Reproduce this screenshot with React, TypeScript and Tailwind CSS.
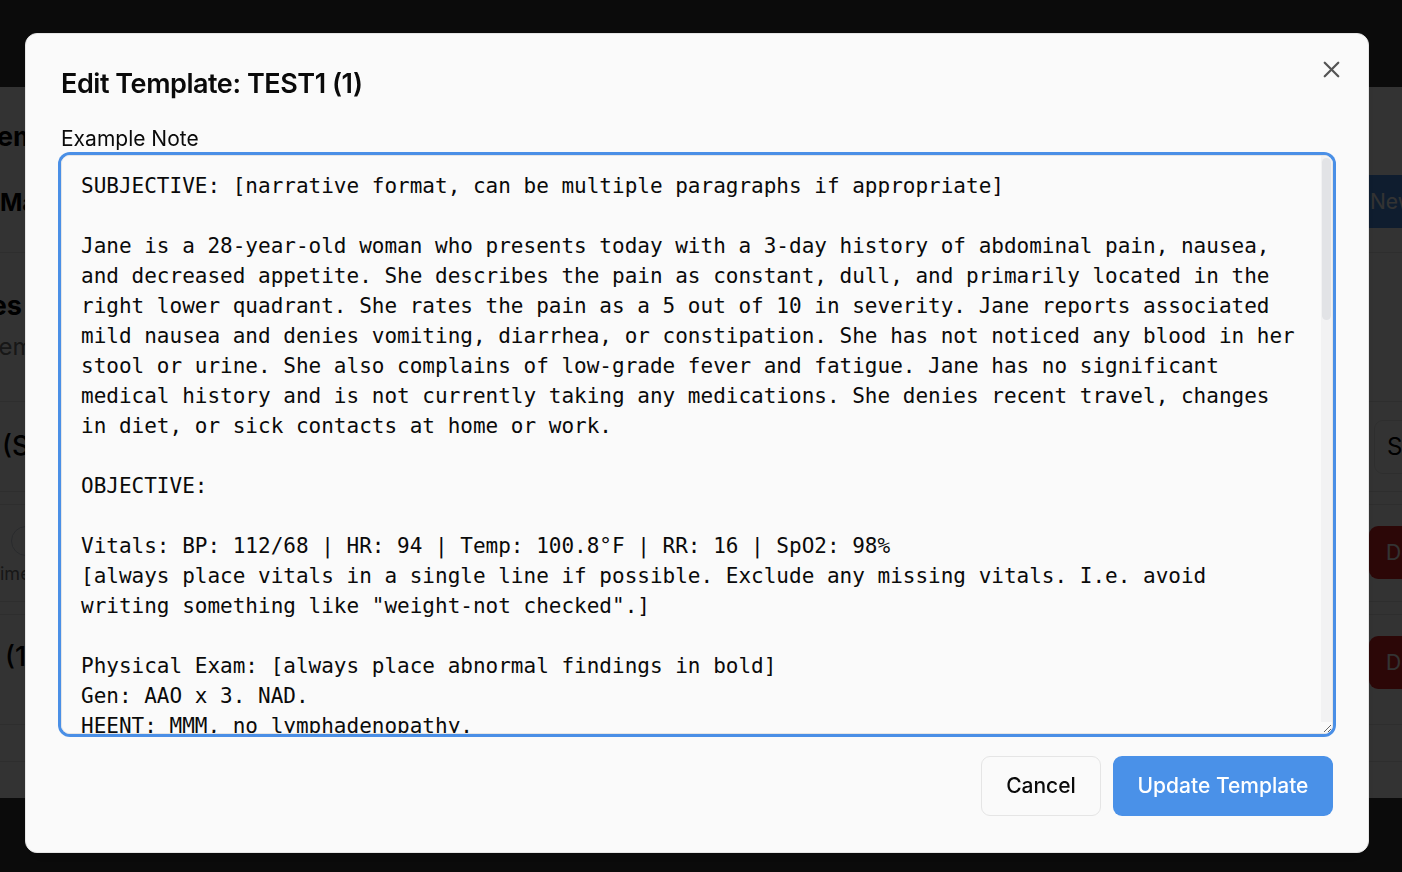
import { X } from 'lucide-react';

const NOTE = `SUBJECTIVE: [narrative format, can be multiple paragraphs if appropriate]

Jane is a 28-year-old woman who presents today with a 3-day history of abdominal pain, nausea, and decreased appetite. She describes the pain as constant, dull, and primarily located in the right lower quadrant. She rates the pain as a 5 out of 10 in severity. Jane reports associated mild nausea and denies vomiting, diarrhea, or constipation. She has not noticed any blood in her stool or urine. She also complains of low-grade fever and fatigue. Jane has no significant medical history and is not currently taking any medications. She denies recent travel, changes in diet, or sick contacts at home or work.

OBJECTIVE:

Vitals: BP: 112/68 | HR: 94 | Temp: 100.8°F | RR: 16 | SpO2: 98%
[always place vitals in a single line if possible. Exclude any missing vitals. I.e. avoid writing something like "weight-not checked".]

Physical Exam: [always place abnormal findings in bold]
Gen: AAO x 3. NAD.
HEENT: MMM, no lymphadenopathy.
CV: RRR, no murmurs, rubs, or gallops.
Lungs: CTAB, no wheezes, rales, or rhonchi.
Abd: **Tenderness to palpation in the RLQ with mild guarding.** No rebound tenderness. Negative Rovsing's sign. Bowel sounds present.
Ext: No edema. Pulses 2+ bilaterally.
Skin: Warm and dry, no rashes.
Neuro: No focal deficits.

Labs/Imaging: [include only if results are available]
CBC: WBC 12.4 (elevated), Hgb 13.1, Plt 245
BMP: within normal limits
Urinalysis: negative for leukocytes, nitrites, and blood
Urine hCG: negative

ASSESSMENT: [list each diagnosis with supporting reasoning]

1. Right lower quadrant abdominal pain - concerning for early appendicitis given location, low-grade fever, nausea, and leukocytosis. Differential includes ovarian cyst, ovarian torsion, mesenteric adenitis, and gastroenteritis.
2. Low-grade fever - likely secondary to #1.

PLAN: [numbered by problem, include patient education and follow-up]

1. RLQ abdominal pain
- CT abdomen/pelvis with IV contrast today
- Pelvic ultrasound if CT is non-diagnostic
- Surgical consult if imaging consistent with appendicitis
- NPO pending imaging results
- Ondansetron 4 mg ODT q8h PRN nausea
2. Low-grade fever
- Acetaminophen 650 mg PO q6h PRN fever or pain
- Encourage oral hydration as tolerated once cleared to eat

Patient education: Discussed warning signs including worsening pain, persistent vomiting, high fever, or inability to tolerate fluids. Patient instructed to go to the ED immediately if any of these occur.

Follow-up: Return to clinic in 2-3 days or sooner if symptoms worsen.`;

// the templates page sitting behind the dialog, mostly hidden
function TemplatesPage() {
  return (
    <div className="min-h-screen bg-[#383838] font-[Inter,sans-serif]">
      <header className="h-[87px]" />
      <main className="h-[711px] overflow-hidden bg-white text-black">
        <div className="flex h-[166px] border-b border-[#e5e5e5]">
          <div className="w-[1346px] shrink-0 pt-[35px]">
            <p className="-ml-[19px] whitespace-nowrap text-[27px] font-bold leading-[30px]">Templates</p>
            <h1 className="mt-[36px] whitespace-nowrap text-[24px] font-bold leading-[30px]">Manage Templates</h1>
          </div>
          <div className="pt-[88px]">
            <button className="h-[53px] whitespace-nowrap rounded-[9px] bg-[#4a91e8] px-[24px] text-[21px] text-white">
              New Template
            </button>
          </div>
        </div>

        <div className="h-[149px] border-b border-[#e5e5e5] pt-[38px]">
          <div className="flex w-[22px] justify-end whitespace-nowrap text-[27px] font-bold leading-[30px]">
            Saved Templates
          </div>
          <p className="mt-[11px] -ml-[15px] whitespace-nowrap text-[24px] leading-[30px] text-[#737373]">
            Templates you have saved
          </p>
        </div>

        <div className="flex h-[90px] items-center border-b border-[#e5e5e5]">
          <div className="w-[1374px] shrink-0 whitespace-nowrap pl-[2px] text-[27px] font-medium">(Standard)</div>
          <div className="flex h-[54px] items-center whitespace-nowrap rounded-[9px] border border-[#e5e5e5] px-[12px] text-[24px]">
            Set Default
          </div>
        </div>

        <div className="mt-[12px] flex h-[98px] border-y border-[#e5e5e5] pt-[21px]">
          <div className="w-[1369px] shrink-0">
            <span className="ml-[11px] block h-[30px] w-[30px] rounded-full border border-[#c9cfdb]" />
            <p className="mt-[8px] whitespace-nowrap text-[18px] leading-[20px] text-[#737373]">imestamp</p>
          </div>
          <div className="flex h-[53px] items-center whitespace-nowrap rounded-[9px] bg-[#dc2626] px-[17px] text-[21px] text-white">
            Delete
          </div>
        </div>

        <div className="mt-[12px] flex h-[111px] border-y border-[#e5e5e5] pt-[21px]">
          <div className="w-[1369px] shrink-0 whitespace-nowrap pl-[5px] pt-[1px] text-[27px] font-medium">(1)</div>
          <div className="flex h-[53px] items-center whitespace-nowrap rounded-[9px] bg-[#dc2626] px-[17px] text-[21px] text-white">
            Delete
          </div>
        </div>

        <div className="mt-[36px] border-t border-[#e5e5e5]" />
      </main>
    </div>
  );
}

export default function App() {
  return (
    <div className="relative">
      <TemplatesPage />

      <div className="fixed inset-0 bg-black/80" />

      <div className="fixed inset-0 flex items-start pl-[25px] pt-[33px] font-[Inter,sans-serif]">
        <div
          role="dialog"
          className="relative w-[1344px] rounded-[12px] border border-[#e5e5e5] bg-[#fafafa] px-[35px] pt-[35px] pb-[36px] shadow-lg"
        >
          <h2 className="text-[27px] font-semibold leading-[29px] tracking-[-0.45px] text-[#0a0a0a]">
            Edit Template: TEST1 (1)
          </h2>

          <label htmlFor="example-note" className="mt-[26px] block text-[21px] leading-[30px] text-[#0a0a0a]">
            Example Note
          </label>
          <div className="relative mt-[1px]">
            <textarea
              id="example-note"
              defaultValue={NOTE}
              spellCheck={false}
              className="block h-[579px] w-full resize-y rounded-[9px] border border-[#e5e5e5] bg-[#fafafa] pl-[19px] pr-[31px] pt-[15px] pb-[13px] font-['DejaVu_Sans_Mono',monospace] text-[21px] leading-[30px] text-[#0a0a0a] outline-none ring-[3px] ring-[#4a8fe6]"
            />
            {/* scrollbar */}
            <div className="pointer-events-none absolute right-[1px] top-[1px] h-[566px] w-[11px] rounded-tr-[8px] bg-[#f2f2f3]">
              <div className="mt-[2px] ml-[1px] h-[162px] w-[9px] rounded-full bg-[#e2e3e6]" />
            </div>
          </div>

          <div className="mt-[22px] flex justify-end gap-[12px]">
            <button className="h-[60px] w-[120px] rounded-[9px] border-[1.5px] border-[#e5e5e5] bg-[#fafafa] text-[21px] font-medium text-[#0a0a0a]">
              Cancel
            </button>
            <button className="h-[60px] w-[220px] rounded-[9px] bg-[#4a91e8] text-[21px] font-medium text-white">
              Update Template
            </button>
          </div>

          <button className="absolute right-[23px] top-[22px] text-[#555]" aria-label="Close">
            <X size={27} strokeWidth={2} />
          </button>
        </div>
      </div>
    </div>
  );
}
